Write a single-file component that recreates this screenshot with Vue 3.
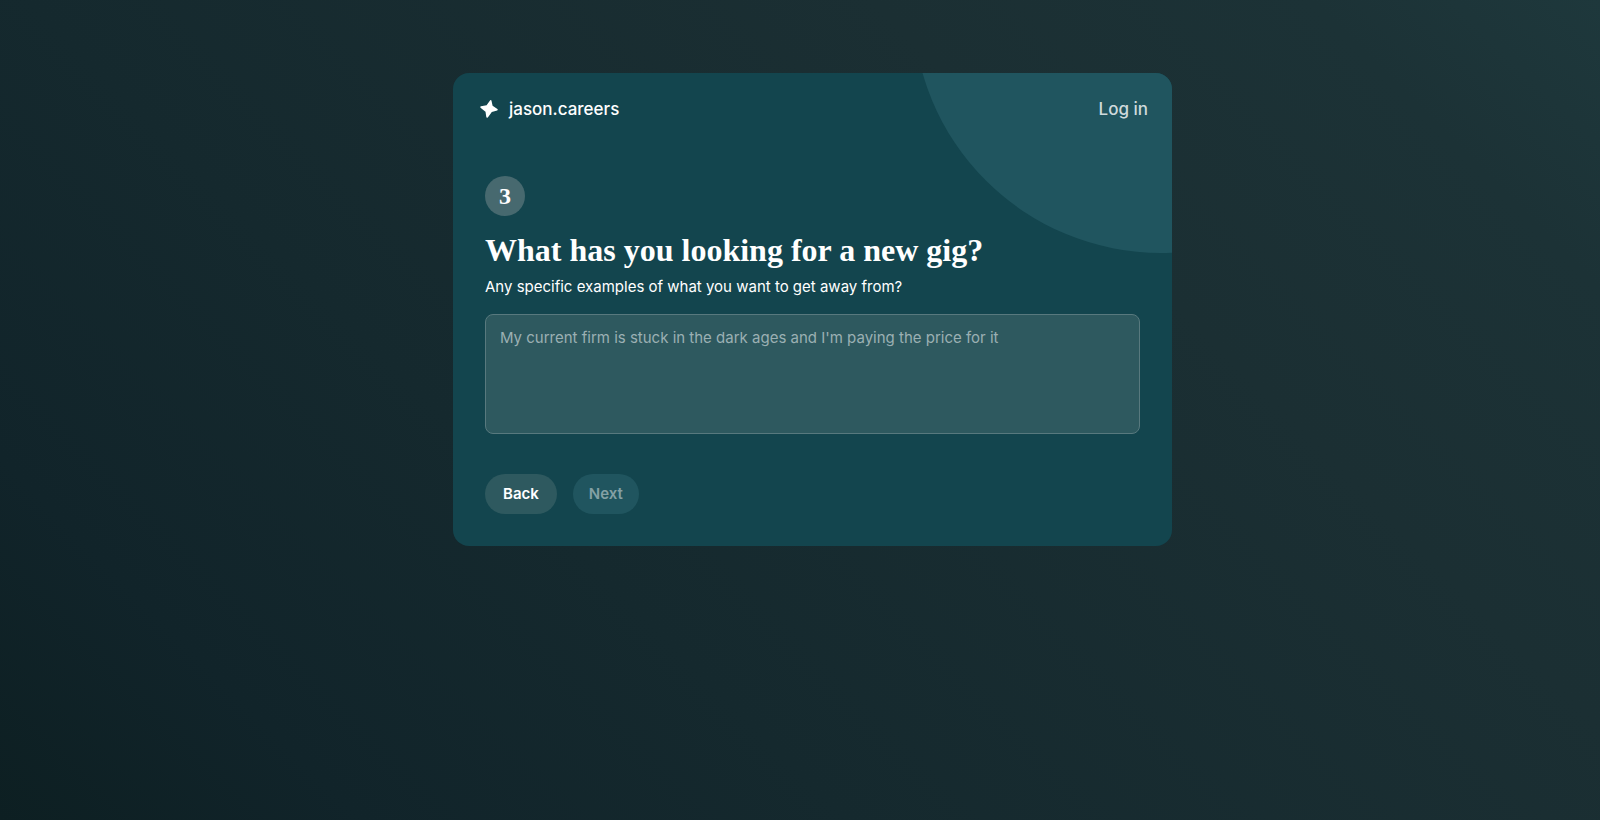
<script setup>
import { ref } from 'vue'

const answer = ref('')
</script>

<template>
  <main class="page">
    <section class="card">
      <div class="orb" aria-hidden="true"></div>
      <header class="top">
        <a class="brand" href="#">
          <svg class="star" viewBox="0 0 20 20" aria-hidden="true">
            <path d="M11.2 1.2Q12.2 .4 12.5 1.7L13.6 6.8L18.4 10Q19.4 10.9 18.2 11.4L12.8 12.9L9 18.2Q7.7 19.3 7.3 18L6.5 12.7L1.5 8.7Q.7 7.5 2 7.200L7.600 6.300Z" />
          </svg>
          <span>jason.careers</span>
        </a>
        <a class="login" href="#">Log in</a>
      </header>
      <form class="form" @submit.prevent>
        <div class="step">3</div>
        <h1 class="title">What has you looking for a new gig?</h1>
        <label class="hint" for="answer">Any specific examples of what you want to get away from?</label>
        <textarea
          id="answer"
          v-model="answer"
          class="answer"
          placeholder="My current firm is stuck in the dark ages and I'm paying the price for it"
        ></textarea>
        <div class="actions">
          <button class="btn back" type="button">Back</button>
          <button class="btn next" type="submit" :disabled="!answer">Next</button>
        </div>
      </form>
    </section>
  </main>
</template>

<style>
body {
  margin: 0;
  background: #14272b;
}
</style>

<style scoped>
.page {
  box-sizing: border-box;
  min-height: 100vh;
  padding: 73px 0 73px 25px;
  background: linear-gradient(45deg, #0d1f22 0%, #11242a 15%, #15292e 35%, #1b2f33 70%, #1c3236 88%, #1e383c 100%);
  color: #fff;
  font-family: Inter, "Liberation Sans", sans-serif;
}
.card {
  position: relative;
  overflow: hidden;
  max-width: 719px;
  margin: 0 auto;
  border-radius: 16px;
  background: #13454e;
}
.orb {
  position: absolute;
  right: -237px;
  top: -316px;
  width: 496px;
  height: 496px;
  border-radius: 50%;
  background: #20555f;
}
.top {
  position: relative;
  display: flex;
  align-items: center;
  justify-content: space-between;
  padding: 24px 24px 0 26px;
}
.brand,
.login {
  font-size: 17px;
  line-height: 24px;
  font-weight: 500;
  text-decoration: none;
}
.brand {
  display: flex;
  align-items: center;
  gap: 10px;
  color: #fff;
}
.star {
  width: 20px;
  height: 20px;
  fill: currentColor;
}
.login {
  color: #cfdadc;
}
.form {
  position: relative;
  display: flex;
  flex-direction: column;
  padding: 55px 32px 32px;
}
.step {
  display: grid;
  place-items: center;
  width: 40px;
  height: 40px;
  border-radius: 50%;
  background: #47696f;
  font: 700 24px/40px "Liberation Serif", serif;
}
.title {
  margin: 16px 0 0;
  font: 700 32px/36px "Liberation Serif", serif;
}
.hint {
  margin-top: 8px;
  font-size: 15px;
  line-height: 22px;
}
.answer {
  box-sizing: border-box;
  width: 100%;
  height: 120px;
  margin-top: 16px;
  padding: 11px 14px;
  border: 1px solid #58797e;
  border-radius: 8px;
  background: #2e595f;
  color: #fff;
  font: 400 15px/24px Inter, "Liberation Sans", sans-serif;
  resize: none;
  outline: none;
}
.answer::placeholder {
  color: #9bb0b3;
  opacity: 1;
}
.actions {
  display: flex;
  gap: 16px;
  margin-top: 40px;
}
.btn {
  height: 40px;
  border: 0;
  border-radius: 20px;
  font: 600 15px/24px Inter, "Liberation Sans", sans-serif;
}
.back {
  padding: 0 18px;
  background: #2e595f;
  color: #fff;
}
.next {
  padding: 0 16px;
  background: #20555f;
  color: #84a0a5;
}
</style>
